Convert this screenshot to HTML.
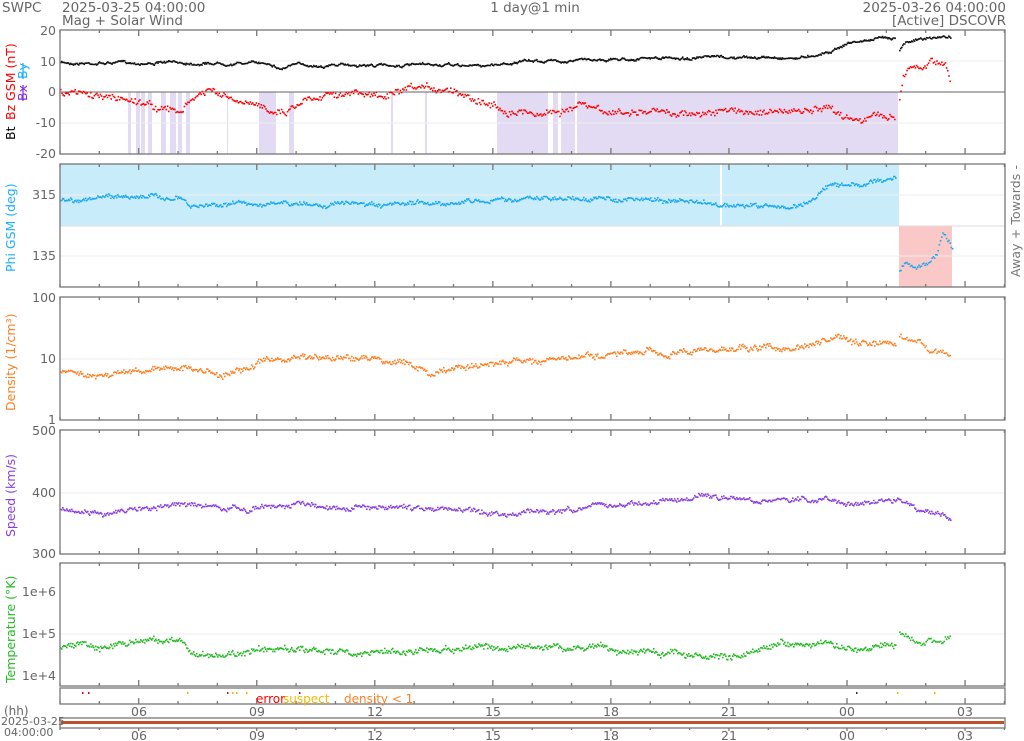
<!DOCTYPE html>
<html><head><meta charset="utf-8"><style>
html,body{margin:0;padding:0;background:#fff;width:1024px;height:741px;overflow:hidden}
svg{display:block;font-family:"DejaVu Sans","Liberation Sans",sans-serif}
</style></head><body>
<svg id="s" width="1024" height="741" xmlns="http://www.w3.org/2000/svg">
<g id="bg"></g>
<g id="pts"></g>
<g id="fr" fill="none" stroke="#777" stroke-width="1.3"></g>
<g font-size="13.5" fill="#666">
<text x="2" y="12">SWPC</text>
<text x="62" y="12">2025-03-25 04:00:00</text>
<text x="62" y="25">Mag + Solar Wind</text>
<text x="535" y="12" text-anchor="middle">1 day@1 min</text>
<text x="1006" y="12" text-anchor="end">2025-03-26 04:00:00</text>
<text x="1006" y="25" text-anchor="end">[Active] DSCOVR</text>
</g>
<g font-size="12.5" fill="#666" text-anchor="end">
<text x="56" y="35">20</text><text x="56" y="66">10</text><text x="56" y="96">0</text><text x="56" y="127">-10</text><text x="56" y="158">-20</text>
<text x="56" y="199">315</text><text x="56" y="260">135</text>
<text x="56" y="302">100</text><text x="56" y="363">10</text><text x="56" y="424">1</text>
<text x="56" y="435">500</text><text x="56" y="497">400</text><text x="56" y="558">300</text>
<text x="56" y="596">1e+6</text><text x="56" y="638">1e+5</text><text x="56" y="680">1e+4</text>
</g>
<g font-size="12.5">
<text transform="translate(15,140) rotate(-90)" fill="#000">Bt</text>
<text transform="translate(15,120) rotate(-90)" fill="#f00">Bz GSM (nT)</text>
<text transform="translate(27,101) rotate(-90)" fill="#8a2be2" text-decoration="line-through">Bx</text>
<text transform="translate(27,79) rotate(-90)" fill="#1ab0ff" text-decoration="line-through">By</text>
<text transform="translate(15,272) rotate(-90)" fill="#1ab0ff">Phi GSM (deg)</text>
<text transform="translate(15,411) rotate(-90)" fill="#ff7f20">Density (1/cm³)</text>
<text transform="translate(15,537) rotate(-90)" fill="#8a3fe0">Speed (km/s)</text>
<text transform="translate(15,683) rotate(-90)" fill="#22bb22">Temperature (°K)</text>
<text transform="translate(1020,277) rotate(-90)" fill="#777" textLength="112">Away +  Towards -</text>
</g>
<g font-size="12">
<text x="256" y="703" fill="#f00">error</text><text x="283" y="703" fill="#f5b800">suspect</text>
<text x="344" y="703" fill="#ff7f20">density &lt; 1</text>
</g>
<g font-size="12.5" fill="#666" text-anchor="middle" id="xl"></g>
<text x="4" y="715" font-size="12" fill="#666">(hh)</text>
<text x="1" y="725" font-size="11" fill="#666">2025-03-25</text>
<text x="4" y="736" font-size="11" fill="#666">04:00:00</text>
</svg>
<script>
var NS="http://www.w3.org/2000/svg";
function el(p,t,a){var e=document.createElementNS(NS,t);for(var k in a)e.setAttribute(k,a[k]);document.getElementById(p).appendChild(e);return e;}
var seed=7;function r(){seed=(seed*16807)%2147483647;return seed/2147483647;}
var panels=[[30,154],[164,287],[297,420],[430,554],[563,686]];
var strips=[[128,131],[136,140],[141,145],[148,152],[161,166],[170,176],[178,182],[186,190],[227,228],[259,276],[289,294],[391,393],[425,427],[497,548],[553,558],[561,575],[577,898]];
strips.forEach(function(s){el("bg","rect",{x:s[0],y:92,width:s[1]-s[0],height:62,fill:"#e3dbf3"});});
el("bg","rect",{x:60,y:164,width:839,height:62,fill:"#c9ecfb"});
el("bg","rect",{x:720,y:164,width:2,height:62,fill:"#fff"});
el("bg","rect",{x:899,y:226,width:53,height:61,fill:"#fbc8c8"});
[61,123].forEach(function(y){el("bg","line",{x1:60,x2:1005,y1:y,y2:y,stroke:"#eee"});});
el("bg","line",{x1:60,x2:1005,y1:92,y2:92,stroke:"#666"});
[195,256,359,493,634].forEach(function(y){el("bg","line",{x1:60,x2:1005,y1:y,y2:y,stroke:"#eee"});});
el("bg","line",{x1:60,x2:1005,y1:226,y2:226,stroke:"#ddd"});
panels.forEach(function(p){el("fr","rect",{x:60,y:p[0],width:945,height:p[1]-p[0]});
 for(var h=0;h<=24;h++){var x=60+h*39.35;var big=(h%3==2);el("fr","line",{x1:x,x2:x,y1:p[1],y2:p[1]-(big?6:3)});el("fr","line",{x1:x,x2:x,y1:p[0],y2:p[0]+(big?6:3)});}
});
el("fr","rect",{x:60,y:688,width:945,height:16});
el("fr","rect",{x:60,y:718,width:945,height:10});
for(var h=0;h<=24;h++){var x=60+h*39.35;var big=(h%3==2);el("fr","line",{x1:x,x2:x,y1:704,y2:704-(big?6:3)});el("fr","line",{x1:x,x2:x,y1:728,y2:728+(big?3:2)});}
el("bg","rect",{x:61,y:721,width:943,height:3,fill:"#c0502a"});
["06","09","12","15","18","21","00","03"].forEach(function(t,i){var x=139+i*118;el("xl","text",{x:x,y:716}).textContent=t;el("xl","text",{x:x,y:740}).textContent=t;});
function interp(cp,x){for(var i=0;i<cp.length-1;i++){if(x>=cp[i][0]&&x<=cp[i+1][0]){var t=(x-cp[i][0])/(cp[i+1][0]-cp[i][0]);return cp[i][1]+t*(cp[i+1][1]-cp[i][1]);}}return null;}
function series(cp,col,noise,step,walk){var d="";var w=0;for(var x=cp[0][0];x<=cp[cp.length-1][0];x+=step){var y=interp(cp,x);if(y===null)continue;w=w*0.9+(r()-0.5)*walk;var yy=y+w+(r()-0.5)*noise;d+="M"+x.toFixed(1)+" "+yy.toFixed(1)+"h1.6v1.6h-1.6z";}
 el("pts","path",{d:d,fill:col});}
series([[60,62],[270,62],[280,68],[290,64],[480,65],[520,61],[620,58],[760,57],[800,57],[830,50],[848,42],[895,36]],"#111",1.2,0.9,1.5);
series([[899,50],[905,40],[950,36]],"#111",1.5,1,1.5);
series([[60,91],[90,95],[110,97],[140,100],[160,108],[180,112],[195,96],[210,90],[230,100],[250,106],[270,108],[285,110],[300,100],[330,90],[380,96],[420,90],[450,88],[480,98],[500,108],[540,112],[560,110],[580,104],[600,112],[700,112],[760,110],[800,112],[830,110],[850,117],[895,115]],"#f00",5,1.2,3);
series([[899,98],[902,78],[910,65],[925,66],[930,60],[945,62],[950,78]],"#f00",4,1.2,3);
series([[60,200],[130,195],[180,198],[190,207],[230,202],[300,204],[360,203],[380,207],[420,203],[520,198],[600,198],[680,200],[730,205],[790,207],[810,200],[825,186],[860,184],[895,176]],"#1aa8f0",3,1,2);
series([[899,270],[905,262],[915,268],[925,263],[930,259],[937,250],[942,232],[947,240],[952,247]],"#1aa8f0",3,1.2,2);
series([[60,370],[100,373],[150,368],[180,366],[220,374],[270,360],[330,356],[400,360],[430,373],[450,370],[470,366],[520,360],[600,356],[640,354],[700,350],[760,346],[790,350],[810,346],[840,338],[860,343],[880,345],[895,347]],"#ff7f20",4,1,3);
series([[899,335],[920,342],[950,355]],"#ff7f20",4,1.2,3);
series([[60,510],[100,513],[190,503],[240,510],[300,503],[380,506],[440,509],[500,512],[560,510],[620,505],[700,497],[760,500],[800,498],[860,502],[900,500],[930,512],[950,517]],"#8a3fe0",3,1,2.5);
series([[60,645],[180,640],[190,655],[300,648],[330,652],[380,653],[450,647],[580,646],[620,650],[700,654],[740,657],[780,645],[820,640],[850,650],[895,645]],"#22bb22",4,1,3);
series([[899,632],[920,645],[950,636]],"#22bb22",4,1.2,3);
[[82,"#d00"],[88,"#d00"],[187,"#f5b800"],[227,"#f00"],[232,"#f5b800"],[236,"#f5b800"],[246,"#f5b800"],[299,"#d00"],[856,"#333"],[897,"#f5b800"],[934,"#f5b800"]].forEach(function(f){el("pts","rect",{x:f[0],y:692,width:1.5,height:2,fill:f[1]});});
</script>
</body></html>
